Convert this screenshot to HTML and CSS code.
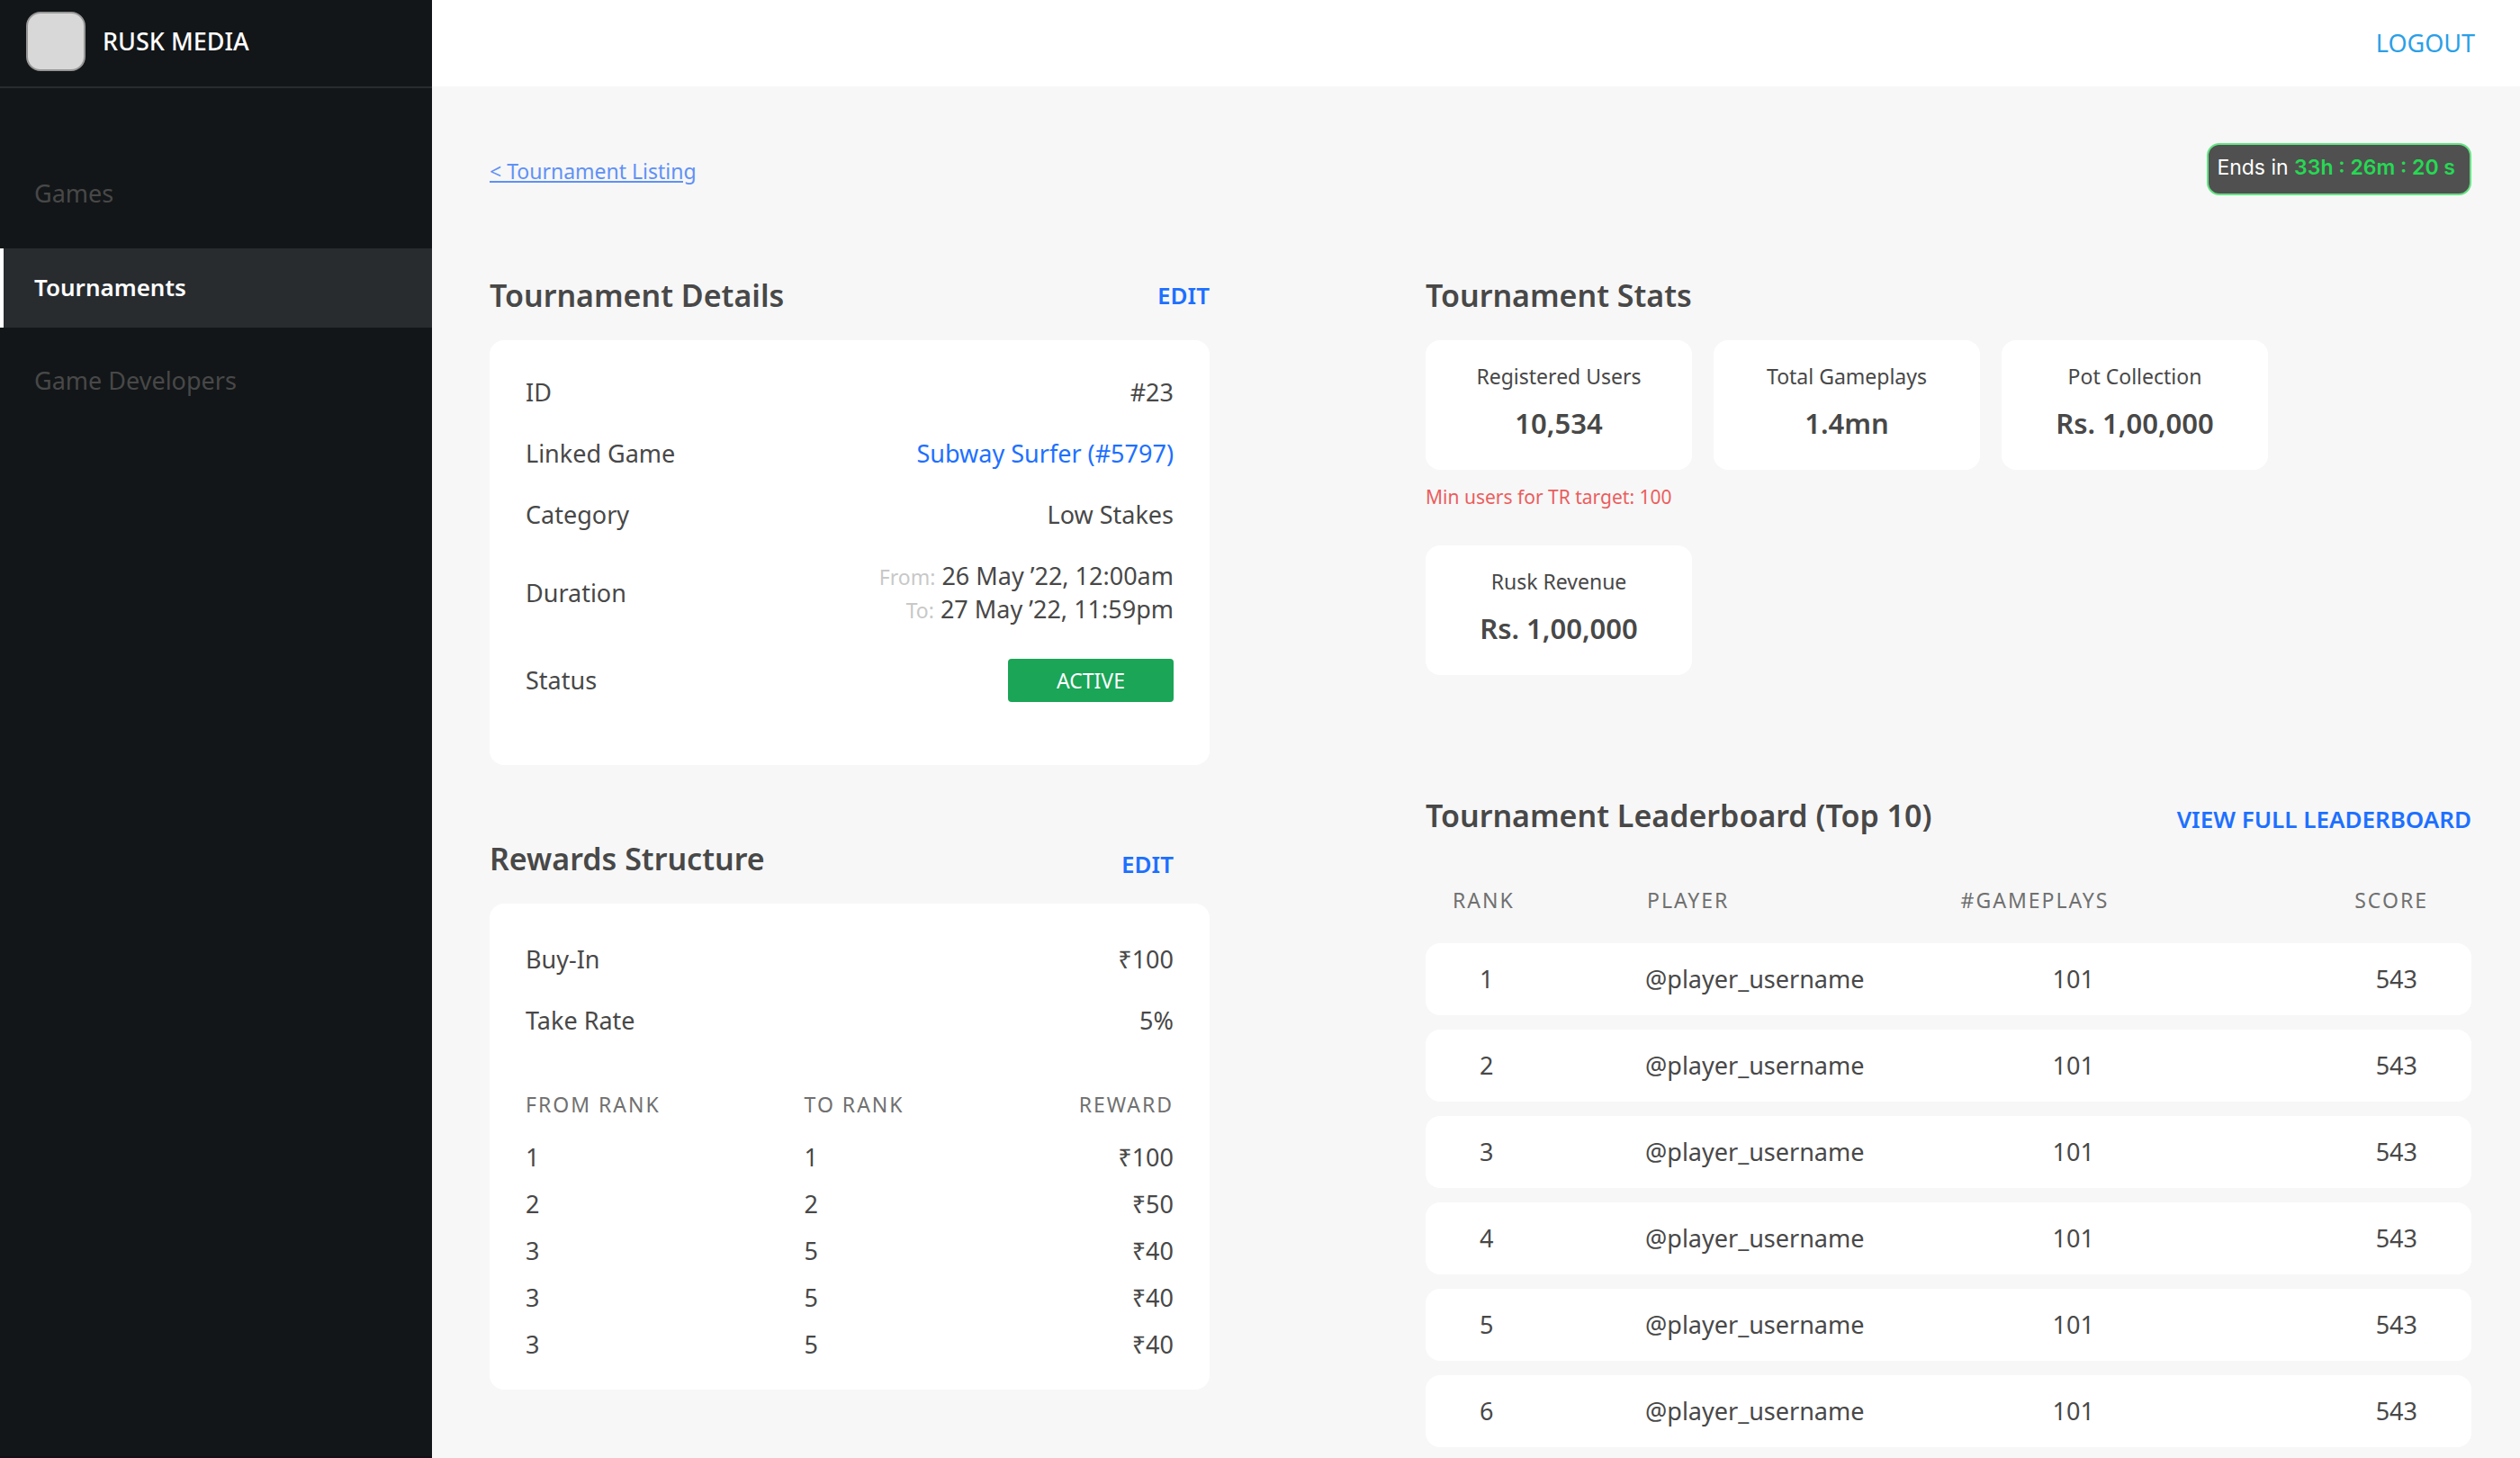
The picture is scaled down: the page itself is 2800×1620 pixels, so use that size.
FILE: index.html
```html
<!DOCTYPE html>
<html lang="en">
<head>
<meta charset="utf-8">
<meta name="viewport" content="width=device-width, initial-scale=1">
<title>Rusk Media – Tournament</title>
<link rel="stylesheet" href="styles.css">
</head>
<body>
<div class="app">
  <aside class="sidebar">
    <div class="brand"><span class="brand-logo"></span><span class="brand-name">RUSK MEDIA</span></div>
    <nav class="nav">
      <a class="nav-item" href="#games">Games</a>
      <a class="nav-item active" href="#tournaments" aria-current="page">Tournaments</a>
      <a class="nav-item" href="#developers">Game Developers</a>
    </nav>
  </aside>
  <div class="page">
    <header class="topbar"><button class="logout" type="button">LOGOUT</button></header>
    <main class="content">
      <div class="toolbar">
        <a class="back" href="#listing">&lt; Tournament Listing</a>
        <p class="timer">Ends in <strong>33h : 26m : 20 s</strong></p>
      </div>
      <div class="columns">
        <div class="column">
          <section>
            <div class="section-head"><h2>Tournament Details</h2><button class="action" type="button">EDIT</button></div>
            <dl class="card details">
              <div class="row"><dt>ID</dt><dd>#23</dd></div>
              <div class="row"><dt>Linked Game</dt><dd><a class="game-link" href="#game">Subway Surfer (#5797)</a></dd></div>
              <div class="row"><dt>Category</dt><dd>Low Stakes</dd></div>
              <div class="row"><dt>Duration</dt><dd><span class="when">From:</span> 26 May ’22, 12:00am<br><span class="when">To:</span> 27 May ’22, 11:59pm</dd></div>
              <div class="row status-row"><dt>Status</dt><dd class="status">ACTIVE</dd></div>
            </dl>
          </section>
          <section class="rewards-section">
            <div class="section-head rewards-head"><h2>Rewards Structure</h2><button class="action" type="button">EDIT</button></div>
            <div class="card rewards">
              <dl class="terms">
                <div class="row"><dt>Buy-In</dt><dd>₹100</dd></div>
                <div class="row"><dt>Take Rate</dt><dd>5%</dd></div>
              </dl>
              <table class="reward-table">
                <thead><tr><th>FROM RANK</th><th>TO RANK</th><th>REWARD</th></tr></thead>
                <tbody>
                  <tr><td>1</td><td>1</td><td>₹100</td></tr>
                  <tr><td>2</td><td>2</td><td>₹50</td></tr>
                  <tr><td>3</td><td>5</td><td>₹40</td></tr>
                  <tr><td>3</td><td>5</td><td>₹40</td></tr>
                  <tr><td>3</td><td>5</td><td>₹40</td></tr>
                </tbody>
              </table>
            </div>
          </section>
        </div>
        <div class="column">
          <section>
            <div class="section-head"><h2>Tournament Stats</h2></div>
            <div class="stats">
              <div class="card stat"><span class="stat-label">Registered Users</span><span class="stat-value">10,534</span></div>
              <div class="card stat"><span class="stat-label">Total Gameplays</span><span class="stat-value">1.4mn</span></div>
              <div class="card stat"><span class="stat-label">Pot Collection</span><span class="stat-value">Rs. 1,00,000</span></div>
            </div>
            <p class="warning">Min users for TR target: 100</p>
            <div class="stats">
              <div class="card stat"><span class="stat-label">Rusk Revenue</span><span class="stat-value">Rs. 1,00,000</span></div>
            </div>
          </section>
          <section class="board-section">
            <div class="section-head board-head"><h2>Tournament Leaderboard (Top 10)</h2><a class="action" href="#leaderboard">VIEW FULL LEADERBOARD</a></div>
            <table class="board">
              <thead><tr><th>RANK</th><th>PLAYER</th><th>#GAMEPLAYS</th><th>SCORE</th></tr></thead>
              <tbody>
                <tr><td>1</td><td>@player_username</td><td>101</td><td>543</td></tr>
                <tr><td>2</td><td>@player_username</td><td>101</td><td>543</td></tr>
                <tr><td>3</td><td>@player_username</td><td>101</td><td>543</td></tr>
                <tr><td>4</td><td>@player_username</td><td>101</td><td>543</td></tr>
                <tr><td>5</td><td>@player_username</td><td>101</td><td>543</td></tr>
                <tr><td>6</td><td>@player_username</td><td>101</td><td>543</td></tr>
              </tbody>
            </table>
          </section>
        </div>
      </div>
    </main>
  </div>
</div>
</body>
</html>
```
FILE: styles.css
```css
*, *::before, *::after { box-sizing: border-box; }

body {
  margin: 0;
  background: #f7f7f7;
  color: #484848;
  font: 400 27px/36px "Noto Sans", sans-serif;
}

h2, p, dl, dd { margin: 0; }
a { color: inherit; text-decoration: none; }
button { padding: 0; border: 0; background: none; font: inherit; cursor: pointer; }

.app { display: flex; min-height: 100vh; }

/* Sidebar */
.sidebar {
  flex: 0 0 480px;
  background: #121618;
  border-bottom: 2px solid #120f16;
}
.brand {
  display: flex;
  align-items: center;
  gap: 19px;
  height: 98px;
  padding: 0 29px 4px;
  border-bottom: 2px solid #282c2f;
  color: #fff;
}
.brand-logo {
  width: 66px;
  height: 66px;
  border: 2px solid #979797;
  border-radius: 16px;
  background: #d8d8d8;
}
.brand-name { font-weight: 500; }
.nav {
  display: flex;
  flex-direction: column;
  gap: 16px;
  padding-top: 74px;
}
.nav-item {
  display: flex;
  align-items: center;
  height: 88px;
  padding: 0 0 2px 34px;
  border-left: 4px solid transparent;
  color: #484848;
}
.nav-item.active {
  border-left-color: #fff;
  background: #282c2f;
  color: #fff;
  font-size: 26px;
  font-weight: 600;
}

/* Page frame */
.page { flex: 1; min-width: 0; }
.topbar {
  display: flex;
  align-items: center;
  justify-content: flex-end;
  height: 96px;
  padding: 0 50px;
  background: #fff;
}
.logout { color: #2a9fe8; }
.content { padding: 62px 54px 0 64px; }
.toolbar {
  display: flex;
  align-items: center;
  justify-content: space-between;
  height: 60px;
}
.back {
  padding-top: 4px;
  color: #5f91f6;
  font-size: 23px;
  text-decoration: underline;
}
.timer {
  height: 58px;
  padding: 7px 16px 0 9px;
  border: 2px solid #63e483;
  border-radius: 14px;
  background: #505050;
  color: #fff;
  font-family: Inter, sans-serif;
  font-size: 23px;
}
.timer strong { color: #26d953; font-weight: 600; }

.columns {
  display: grid;
  grid-template-columns: minmax(0, 800fr) minmax(0, 1162fr);
  gap: 240px;
  padding-top: 78px;
}

/* Sections */
.section-head {
  display: flex;
  align-items: center;
  justify-content: space-between;
  height: 64px;
  margin-bottom: 18px;
}
h2 { font-size: 34px; line-height: 44px; font-weight: 600; }
.action { color: #1d70ff; font-size: 26px; font-weight: 600; }
.card { border-radius: 16px; background: #fff; }
.row { display: flex; align-items: center; justify-content: space-between; }

.details {
  display: flex;
  flex-direction: column;
  gap: 32px;
  padding: 40px 40px 70px;
}
.details dd { text-align: right; }
.game-link { color: #1d70ff; }
.when { color: #c8c8c8; font-size: 23px; }
.status-row { padding-top: 4px; }
.row .status {
  width: 184px;
  height: 48px;
  border-radius: 4px;
  background: #1aa557;
  color: #fff;
  font-size: 23px;
  line-height: 48px;
  text-align: center;
}

.rewards-section { padding-top: 72px; }
.rewards-head .action { margin: 12px 40px 0 0; }
.rewards { padding: 44px 40px 24px; }
.terms { display: flex; flex-direction: column; gap: 32px; }

th {
  color: #707070;
  font-size: 23px;
  font-weight: 400;
  letter-spacing: 2px;
  text-align: left;
}
.reward-table {
  width: 100%;
  margin-top: 44px;
  table-layout: fixed;
  border-collapse: collapse;
}
.reward-table th { height: 64px; padding: 0 0 2px; }
.reward-table td { height: 52px; padding: 0; }
.reward-table th:nth-child(1) { width: 43%; }
.reward-table th:nth-child(2) { width: 27%; }
.reward-table th:last-child,
.reward-table td:last-child { text-align: right; }

.stats {
  display: grid;
  grid-template-columns: repeat(3, 296px);
  gap: 24px;
}
.stat {
  display: flex;
  flex-direction: column;
  align-items: center;
  gap: 16px;
  height: 144px;
  padding-top: 22px;
}
.stat-label { font-size: 23px; }
.stat-value { font-size: 31px; font-weight: 600; }
.warning {
  padding: 12px 0 36px;
  color: #eb5d5d;
  font-size: 21px;
}

/* Leaderboard */
.board-section { padding-top: 124px; }
.board-head { margin-bottom: 16px; }
.board-head .action { margin-top: 8px; }
.board {
  width: 100%;
  margin-bottom: -16px;
  table-layout: fixed;
  border-spacing: 0 16px;
}
.board thead tr { height: 62px; }
.board th { padding: 0 0 2px 30px; }
.board tbody tr { height: 80px; }
.board td { padding: 0; background: #fff; }
.board th:nth-child(1) { width: 21%; }
.board th:nth-child(2) { width: 30%; padding-left: 2px; }
.board th:nth-child(3) { width: 26%; padding-left: 2px; }
.board td:nth-child(3) { padding-left: 104px; }
.board th:last-child { width: 23%; padding-right: 48px; text-align: right; }
.board td:first-child { padding-left: 60px; border-radius: 16px 0 0 16px; }
.board td:last-child {
  padding-right: 60px;
  border-radius: 0 16px 16px 0;
  text-align: right;
}
```
